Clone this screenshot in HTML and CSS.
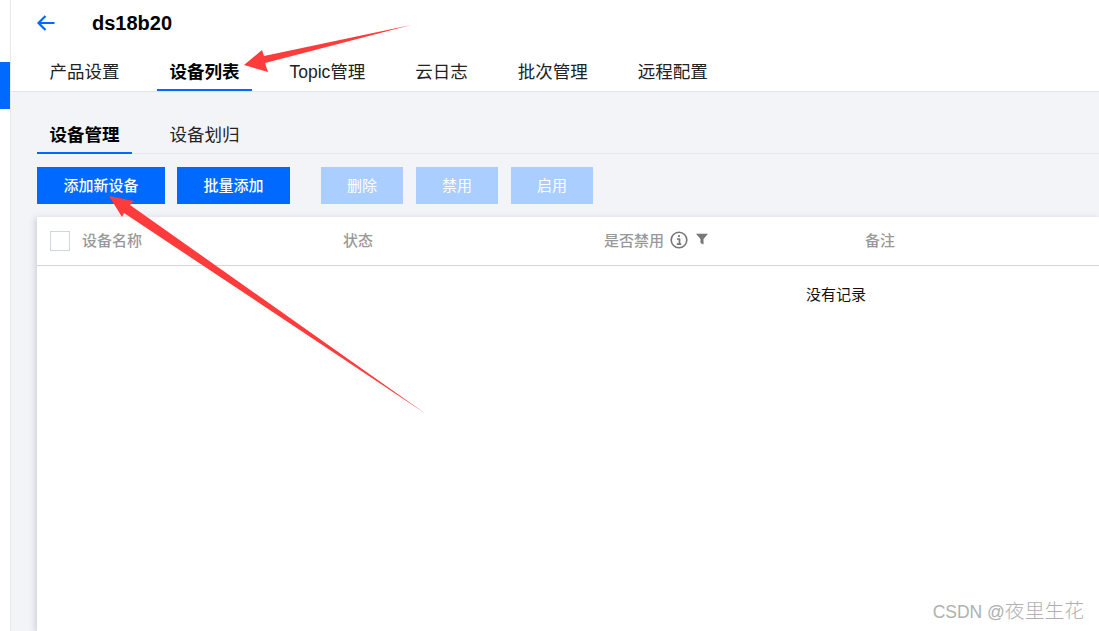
FILE: index.html
```html
<!DOCTYPE html>
<html lang="zh-CN">
<head>
<meta charset="utf-8">
<title>ds18b20</title>
<link rel="stylesheet" href="styles.css">
</head>
<body>
<div class="app">
  <aside class="rail"><div class="rail-mark"></div></aside>
  <main class="main">
    <header class="head">
      <div class="title-row">
        <svg class="back" width="20" height="18" viewBox="0 0 20 18" aria-hidden="true"><path d="M18.500 9H2.500M9.500 2 2.500 9l7 7" fill="none" stroke="#0069ff" stroke-width="2.200"/></svg>
        <h1 class="title">ds18b20</h1>
      </div>
      <nav class="tabs">
        <a class="tab">产品设置</a>
        <a class="tab tab-on">设备列表</a>
        <a class="tab">Topic管理</a>
        <a class="tab">云日志</a>
        <a class="tab">批次管理</a>
        <a class="tab">远程配置</a>
      </nav>
    </header>
    <section class="content">
      <nav class="subtabs">
        <a class="subtab subtab-on">设备管理</a>
        <a class="subtab">设备划归</a>
      </nav>
      <div class="actions">
        <button class="btn btn-add">添加新设备</button>
        <button class="btn btn-batch">批量添加</button>
        <button class="btn btn-off btn-first-off">删除</button>
        <button class="btn btn-off">禁用</button>
        <button class="btn btn-off">启用</button>
      </div>
      <div class="table">
        <div class="thead">
          <div class="th th-name"><span class="check"></span><span class="th-label">设备名称</span></div>
          <div class="th th-state"><span class="th-label">状态</span></div>
          <div class="th th-ban"><span class="th-label">是否禁用</span>
            <svg class="info" width="18" height="18" viewBox="0 0 18 18" aria-hidden="true"><circle cx="9" cy="9" r="7.800" fill="none" stroke="#777" stroke-width="1.600"/><path d="M9 3.900v2.200M7 8h2.500v5M6.800 13.200h4.400" fill="none" stroke="#777" stroke-width="1.700"/></svg>
            <svg class="filter" width="12" height="12" viewBox="0 0 12 12" aria-hidden="true"><path d="M0 .8h12L7.500 6v5.500l-3-1.500V6z" fill="#777"/></svg>
          </div>
          <div class="th"><span class="th-label">备注</span></div>
        </div>
        <div class="empty">没有记录</div>
      </div>
    </section>
  </main>
</div>
<svg class="arrows" width="1099" height="631" viewBox="0 0 1099 631" aria-hidden="true">
  <polygon points="244,65 262,50 264,56 411,25 265,63 268,72" fill="#ff3b3b"/>
  <polygon points="109,196 134,201 130,205 426,414 124,213 122,217" fill="#ff3b3b"/>
</svg>
<div class="mark">CSDN @<span class="mark-cjk">夜里生花</span></div>
</body>
</html>
```
FILE: styles.css
```css
* { box-sizing: border-box; }
html, body { margin: 0; height: 100%; overflow: hidden; }
body {
  background: #fff;
  color: #000;
  font-family: "Liberation Sans", "Noto Sans CJK SC", sans-serif;
}
.app { display: flex; height: 631px; }
.rail {
  width: 11px;
  flex: none;
  padding-top: 62px;
  background: #fff;
  border-right: 1px solid #e6e8ec;
}
.rail-mark { width: 10px; height: 47px; background: #0069ff; }
.main { flex: 1; min-width: 0; display: flex; flex-direction: column; }
.head { height: 92px; flex: none; background: #fff; border-bottom: 1px solid #e4e6ea; }
.title-row { display: flex; align-items: center; height: 46px; padding-left: 25px; }
.back { flex: none; }
.title { margin: 0 0 0 36px; font-size: 20px; font-weight: 700; line-height: 46px; }
.tabs { display: flex; gap: 25px; padding-left: 26px; height: 45px; }
.tab {
  padding: 0 12.500px;
  font-size: 17.500px;
  line-height: 52px;
  height: 45px;
  color: #222;
  white-space: nowrap;
}
.tab-on { font-weight: 700; color: #000; border-bottom: 2px solid #0069ff; }
.content { flex: 1; min-height: 0; background: #f2f4f8; padding: 0 0 0 26px; display: flex; flex-direction: column; }
.subtabs { display: flex; gap: 25px; height: 62px; padding-top: 25px; border-bottom: 1px solid #e4e6ea; }
.subtab { padding: 0 12.500px; font-size: 17.500px; line-height: 36px; height: 37px; color: #222; }
.subtab-on { font-weight: 700; color: #000; border-bottom: 2px solid #0069ff; }
.actions { display: flex; margin-top: 13px; gap: 13px; }
.btn {
  height: 37px;
  border: 0;
  padding: 0 0 2px;
  color: #fff;
  background: #0069ff;
  font-family: inherit;
  font-size: 15px;
  font-weight: 500;
}
.btn-add { width: 128px; }
.btn-batch { width: 113px; margin-left: -1px; }
.btn-off { width: 82px; background: #a9ceff; font-weight: 400; }
.btn-first-off { margin-left: 18px; }
.table {
  flex: 1;
  margin-top: 13px;
  background: #fff;
  box-shadow: -2px 1px 6px rgba(90, 100, 125, .25);
}
.thead { display: flex; align-items: center; height: 49px; border-bottom: 1px solid #d2d5dc; }
.th { width: 261px; flex: none; display: flex; align-items: center; font-size: 15px; font-weight: 500; color: #999; }
.th-label { position: relative; top: -2px; margin-left: -1px; }
.th-name { width: 307px; padding-left: 13px; }
.th-state { width: 261px; }
.check { width: 20px; height: 20px; margin-right: 13px; flex: none; background: #fff; border: 1px solid #cfd4dd; }
.info { margin-left: 6px; position: relative; top: -1px; }
.filter { margin-left: 8px; position: relative; top: -2px; }
.empty { margin-top: 20px; padding-left: 769px; font-size: 15px; line-height: 18px; color: #111; }
.arrows { position: absolute; left: 0; top: 0; pointer-events: none; }
.mark {
  position: absolute;
  right: 15px;
  bottom: 8px;
  font-size: 17.500px;
  line-height: 22px;
  color: #b0b0b0;
}
.mark-cjk { font-size: 19.800px; font-weight: 300; }
```
